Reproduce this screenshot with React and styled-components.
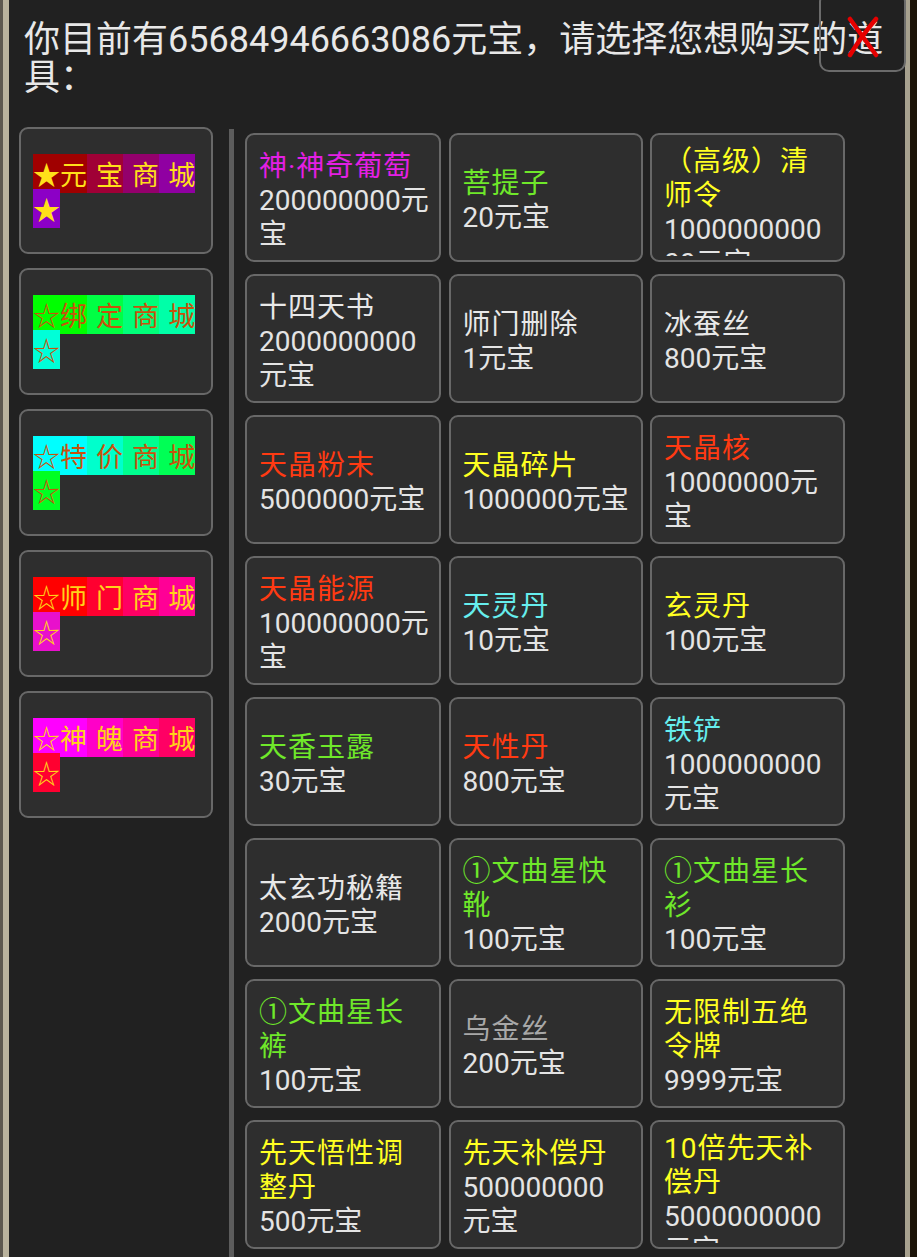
import styled, { createGlobalStyle } from 'styled-components';

const GlobalStyle = createGlobalStyle`
  html, body {
    margin: 0;
    height: 100%;
    overflow: hidden;
    background: #1c1409;
  }
  #root {
    height: 100%;
  }
`;

const Frame = styled.div`
  position: relative;
  height: 100%;
  margin-left: 3px;
  margin-right: 7px;
  border-left: 6px solid #bab39d;
  border-right: 5px solid #a7a18f;
  box-shadow: -3px 0 0 #5e594f;
  background: #212121;
  font-family: Roboto, "Noto Sans CJK SC", sans-serif;
`;

const Header = styled.div`
  padding: 21px 8px 0 15px;
  font-size: 36px;
  line-height: 38px;
  color: #e8e8e8;
`;

const CloseButton = styled.button`
  position: absolute;
  top: -8px;
  right: -1px;
  width: 87px;
  height: 80px;
  padding: 10px 0 0;
  border: 2px solid #6b6b6b;
  border-radius: 10px;
  background: transparent;
  display: flex;
  align-items: center;
  justify-content: center;
  cursor: pointer;
`;

const Body = styled.div`
  display: flex;
  align-items: stretch;
  margin-top: 30px;
  height: 100%;
`;

const Menu = styled.nav`
  display: flex;
  flex-direction: column;
  gap: 14px;
  width: 194px;
  margin-left: 10px;
  flex-shrink: 0;
`;

const MenuItem = styled.div`
  height: 127px;
  box-sizing: border-box;
  border: 2px solid #686868;
  border-radius: 9px;
  background: #2e2e2e;
  padding: 0 12px;
  display: flex;
  align-items: center;
`;

const MenuLabel = styled.div`
  font-family: "Noto Sans CJK SC", sans-serif;
  font-size: 27px;
  line-height: 35px;
  word-spacing: 3px;
  color: ${(p) => p.$color};
`;

const Seg = styled.span`
  background: ${(p) => p.$bg};
`;

const Divider = styled.div`
  width: 5px;
  margin: 2px 0 0 16px;
  background: #5c5c5c;
  flex-shrink: 0;
`;

const Grid = styled.div`
  display: grid;
  grid-template-columns: 196px 194px 195px;
  grid-auto-rows: 129px;
  column-gap: 7.5px;
  row-gap: 12px;
  margin: 6px 0 0 11px;
  align-content: start;
`;

const Card = styled.div`
  box-sizing: border-box;
  border: 2px solid #686868;
  border-radius: 9px;
  background: #2e2e2e;
  padding: 4px 9px 4px 12px;
  display: flex;
  min-width: 0;

  &:nth-child(3n + 1) {
    padding-right: 7px;
  }
  &:nth-child(3n + 2) {
    padding-right: 10px;
  }
`;

const Clip = styled.div`
  flex: 1;
  min-width: 0;
  overflow: hidden;
  padding: 6px 0 0;
  display: flex;
  flex-direction: column;
`;

const Info = styled.div`
  margin: auto 0;
  flex-shrink: 0;
  font-size: 28px;
  line-height: 34px;
  overflow-wrap: break-word;
`;

const Name = styled.div`
  color: ${(p) => p.$color};
  letter-spacing: 1px;
`;

const Price = styled.div`
  color: #e4e4e4;
`;

const shops = [
  {
    color: '#ffdf1a',
    segs: [
      ['★元', '#a00000'],
      [' 宝', '#a00036'],
      [' 商', '#94006c'],
      [' 城', '#9000a2'],
      ['★', '#8c00c6'],
    ],
  },
  {
    color: '#c8520c',
    segs: [
      ['☆绑', '#00ff00'],
      [' 定', '#00ff44'],
      [' 商', '#00ff7a'],
      [' 城', '#00ffa8'],
      ['☆', '#00ffd8'],
    ],
  },
  {
    color: '#c8520c',
    segs: [
      ['☆特', '#00ffff'],
      [' 价', '#00ffcc'],
      [' 商', '#00ff90'],
      [' 城', '#00ff55'],
      ['☆', '#00ff22'],
    ],
  },
  {
    color: '#ffd21a',
    segs: [
      ['☆师', '#ff0000'],
      [' 门', '#ff0030'],
      [' 商', '#ff0064'],
      [' 城', '#ff0096'],
      ['☆', '#e810cc'],
    ],
  },
  {
    color: '#ffd21a',
    segs: [
      ['☆神', '#ff00ff'],
      [' 魄', '#ff00c8'],
      [' 商', '#ff0096'],
      [' 城', '#ff0064'],
      ['☆', '#ff0030'],
    ],
  },
];

const WHITE = '#e8e8e8';
const GREEN = '#6fe82a';
const YELLOW = '#ffff22';
const RED = '#ff3a12';
const CYAN = '#66eeee';
const PINK = '#e41fe4';
const GRAY = '#a8a8a8';

const items = [
  ['神·神奇葡萄', '200000000元宝', PINK],
  ['菩提子', '20元宝', GREEN],
  ['（高级）清师令', '100000000000元宝', YELLOW],
  ['十四天书', '2000000000元宝', WHITE],
  ['师门删除', '1元宝', WHITE],
  ['冰蚕丝', '800元宝', WHITE],
  ['天晶粉末', '5000000元宝', RED],
  ['天晶碎片', '1000000元宝', YELLOW],
  ['天晶核', '10000000元宝', RED],
  ['天晶能源', '100000000元宝', RED],
  ['天灵丹', '10元宝', CYAN],
  ['玄灵丹', '100元宝', YELLOW],
  ['天香玉露', '30元宝', GREEN],
  ['天性丹', '800元宝', RED],
  ['铁铲', '1000000000元宝', CYAN],
  ['太玄功秘籍', '2000元宝', WHITE],
  ['①文曲星快靴', '100元宝', GREEN],
  ['①文曲星长衫', '100元宝', GREEN],
  ['①文曲星长裤', '100元宝', GREEN],
  ['乌金丝', '200元宝', GRAY],
  ['无限制五绝令牌', '9999元宝', YELLOW],
  ['先天悟性调整丹', '500元宝', YELLOW],
  ['先天补偿丹', '500000000元宝', YELLOW],
  ['10倍先天补偿丹', '5000000000元宝', YELLOW],
];

const CloseIcon = () => (
  <svg width="34" height="42" viewBox="0 0 34 42">
    <path d="M4 3 L30 39" stroke="#e60000" strokeWidth="4.5" strokeLinecap="round" fill="none" />
    <path d="M30 3 Q17 18 4 39" stroke="#e60000" strokeWidth="4.5" strokeLinecap="round" fill="none" />
  </svg>
);

export default function App() {
  return (
    <>
      <GlobalStyle />
      <Frame>
        <Header>你目前有65684946663086元宝，请选择您想购买的道具：</Header>
        <CloseButton aria-label="关闭">
          <CloseIcon />
        </CloseButton>
        <Body>
          <Menu>
            {shops.map((shop, i) => (
              <MenuItem key={i}>
                <MenuLabel $color={shop.color}>
                  {shop.segs.map(([t, bg], j) => (
                    <Seg key={j} $bg={bg}>
                      {t}
                    </Seg>
                  ))}
                </MenuLabel>
              </MenuItem>
            ))}
          </Menu>
          <Divider />
          <Grid>
            {items.map(([name, price, color]) => (
              <Card key={name}>
                <Clip>
                  <Info>
                    <Name $color={color}>{name}</Name>
                    <Price>{price}</Price>
                  </Info>
                </Clip>
              </Card>
            ))}
          </Grid>
        </Body>
      </Frame>
    </>
  );
}
